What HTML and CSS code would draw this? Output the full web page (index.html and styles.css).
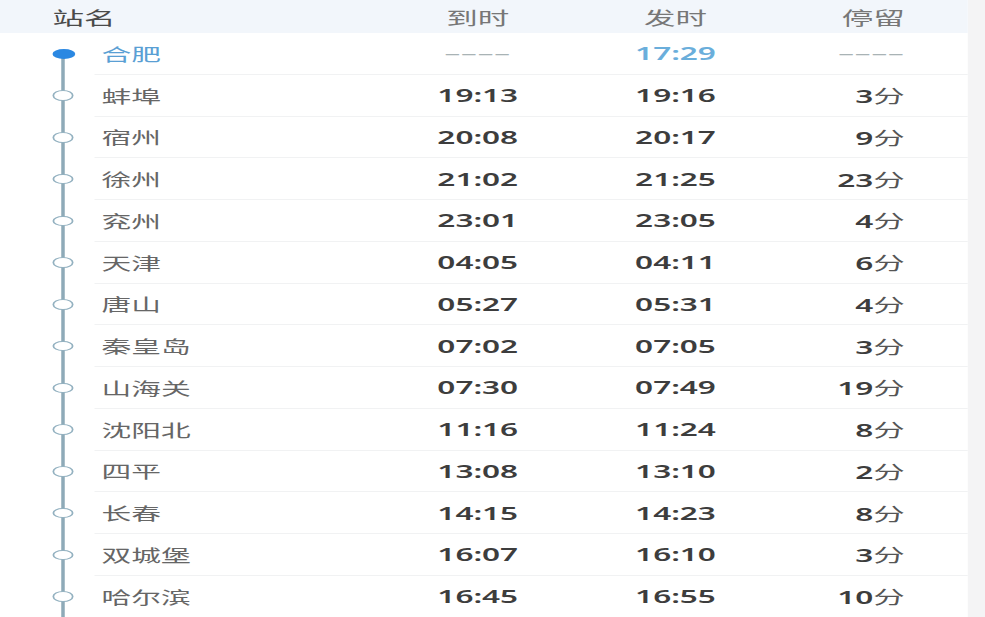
FILE: index.html
```html
<!DOCTYPE html>
<html lang="zh-CN">
<head>
<meta charset="utf-8">
<title>经停站</title>
<link rel="stylesheet" href="styles.css">
</head>
<body>
<div class="page">
  <div class="head">
    <div class="h-name">站名</div>
    <div class="h-col">到时</div>
    <div class="h-col">发时</div>
    <div class="h-stop">停留</div>
  </div>
  <div class="list">
    <div class="row first"><div class="tl"><span class="dot on"></span></div><div class="cells"><div class="name cur">合肥</div><div class="t dash">––––</div><div class="t cur">17:29</div><div class="s dash">––––</div></div></div>
    <div class="row"><div class="tl"><span class="dot"></span></div><div class="cells"><div class="name">蚌埠</div><div class="t">19:13</div><div class="t">19:16</div><div class="s">3<span class="u">分</span></div></div></div>
    <div class="row"><div class="tl"><span class="dot"></span></div><div class="cells"><div class="name">宿州</div><div class="t">20:08</div><div class="t">20:17</div><div class="s">9<span class="u">分</span></div></div></div>
    <div class="row"><div class="tl"><span class="dot"></span></div><div class="cells"><div class="name">徐州</div><div class="t">21:02</div><div class="t">21:25</div><div class="s">23<span class="u">分</span></div></div></div>
    <div class="row"><div class="tl"><span class="dot"></span></div><div class="cells"><div class="name">兖州</div><div class="t">23:01</div><div class="t">23:05</div><div class="s">4<span class="u">分</span></div></div></div>
    <div class="row"><div class="tl"><span class="dot"></span></div><div class="cells"><div class="name">天津</div><div class="t">04:05</div><div class="t">04:11</div><div class="s">6<span class="u">分</span></div></div></div>
    <div class="row"><div class="tl"><span class="dot"></span></div><div class="cells"><div class="name">唐山</div><div class="t">05:27</div><div class="t">05:31</div><div class="s">4<span class="u">分</span></div></div></div>
    <div class="row"><div class="tl"><span class="dot"></span></div><div class="cells"><div class="name">秦皇岛</div><div class="t">07:02</div><div class="t">07:05</div><div class="s">3<span class="u">分</span></div></div></div>
    <div class="row"><div class="tl"><span class="dot"></span></div><div class="cells"><div class="name">山海关</div><div class="t">07:30</div><div class="t">07:49</div><div class="s">19<span class="u">分</span></div></div></div>
    <div class="row"><div class="tl"><span class="dot"></span></div><div class="cells"><div class="name">沈阳北</div><div class="t">11:16</div><div class="t">11:24</div><div class="s">8<span class="u">分</span></div></div></div>
    <div class="row"><div class="tl"><span class="dot"></span></div><div class="cells"><div class="name">四平</div><div class="t">13:08</div><div class="t">13:10</div><div class="s">2<span class="u">分</span></div></div></div>
    <div class="row"><div class="tl"><span class="dot"></span></div><div class="cells"><div class="name">长春</div><div class="t">14:15</div><div class="t">14:23</div><div class="s">8<span class="u">分</span></div></div></div>
    <div class="row"><div class="tl"><span class="dot"></span></div><div class="cells"><div class="name">双城堡</div><div class="t">16:07</div><div class="t">16:10</div><div class="s">3<span class="u">分</span></div></div></div>
    <div class="row"><div class="tl"><span class="dot"></span></div><div class="cells"><div class="name">哈尔滨</div><div class="t">16:45</div><div class="t">16:55</div><div class="s">10<span class="u">分</span></div></div></div>
  </div>
</div>
</body>
</html>
```

FILE: styles.css
```css
html, body {
  margin: 0;
  padding: 0;
}
body {
  background: #f4f4f5;
  width: 985px;
  height: 617px;
  overflow: hidden;
  font-family: "Noto Sans", "Noto Sans CJK SC", sans-serif;
}
.page {
  width: 552.6px;
  background: #ffffff;
  transform: scaleX(1.75);
  transform-origin: 0 0;
}
.head {
  height: 33px;
  background: #f2f6fb;
  display: flex;
  align-items: center;
  font-size: 18px;
  color: #777;
  font-family: "Noto Sans CJK SC", sans-serif;
}
.h-name {
  width: 184px;
  padding-left: 30px;
  color: #4a4a4a;
}
.h-col {
  width: 118px;
  text-align: center;
}
.h-col + .h-col {
  width: 108px;
}
.h-stop {
  width: 77px;
  text-align: right;
}
.row {
  display: flex;
  height: 41.75px;
}
.tl {
  width: 54px;
  position: relative;
  display: flex;
  align-items: center;
  padding-left: 29.75px;
  box-sizing: border-box;
}
.tl::before {
  content: "";
  position: absolute;
  left: 35.2px;
  width: 1.6px;
  top: 0;
  bottom: 0;
  background: #8eaab8;
}
.first .tl::before {
  top: 50%;
}
.dot {
  position: relative;
  width: 10px;
  height: 8.5px;
  border-radius: 50%;
  border: 1.5px solid #93b1c0;
  background: #fff;
  box-sizing: content-box;
}
.dot.on {
  width: 13px;
  height: 10px;
  border: none;
  background: #2b88e2;
}
.cells {
  flex: 1;
  display: flex;
  align-items: center;
  border-bottom: 1px solid #f1f2f3;
  box-sizing: border-box;
  padding-right: 35.6px;
}
.name {
  width: 160px;
  padding-left: 4px;
  box-sizing: border-box;
  font-family: "Noto Sans CJK SC", sans-serif;
  font-size: 17px;
  color: #666;
}
.t {
  width: 118px;
  text-align: center;
  font-size: 18px;
  font-weight: 600;
  color: #3d3d3d;
}
.t + .t {
  width: 108px;
}
.s {
  width: 77px;
  text-align: right;
  font-size: 18px;
  font-weight: 600;
  color: #3d3d3d;
}
.u {
  font-family: "Noto Sans CJK SC", sans-serif;
  font-weight: 400;
  color: #555;
}
.name.cur {
  color: #5a9fd4;
}
.t.cur {
  color: #6aaedb;
}
.dash {
  font-weight: 400;
  color: #a9b3b5;
  letter-spacing: 0.5px;
}
```
